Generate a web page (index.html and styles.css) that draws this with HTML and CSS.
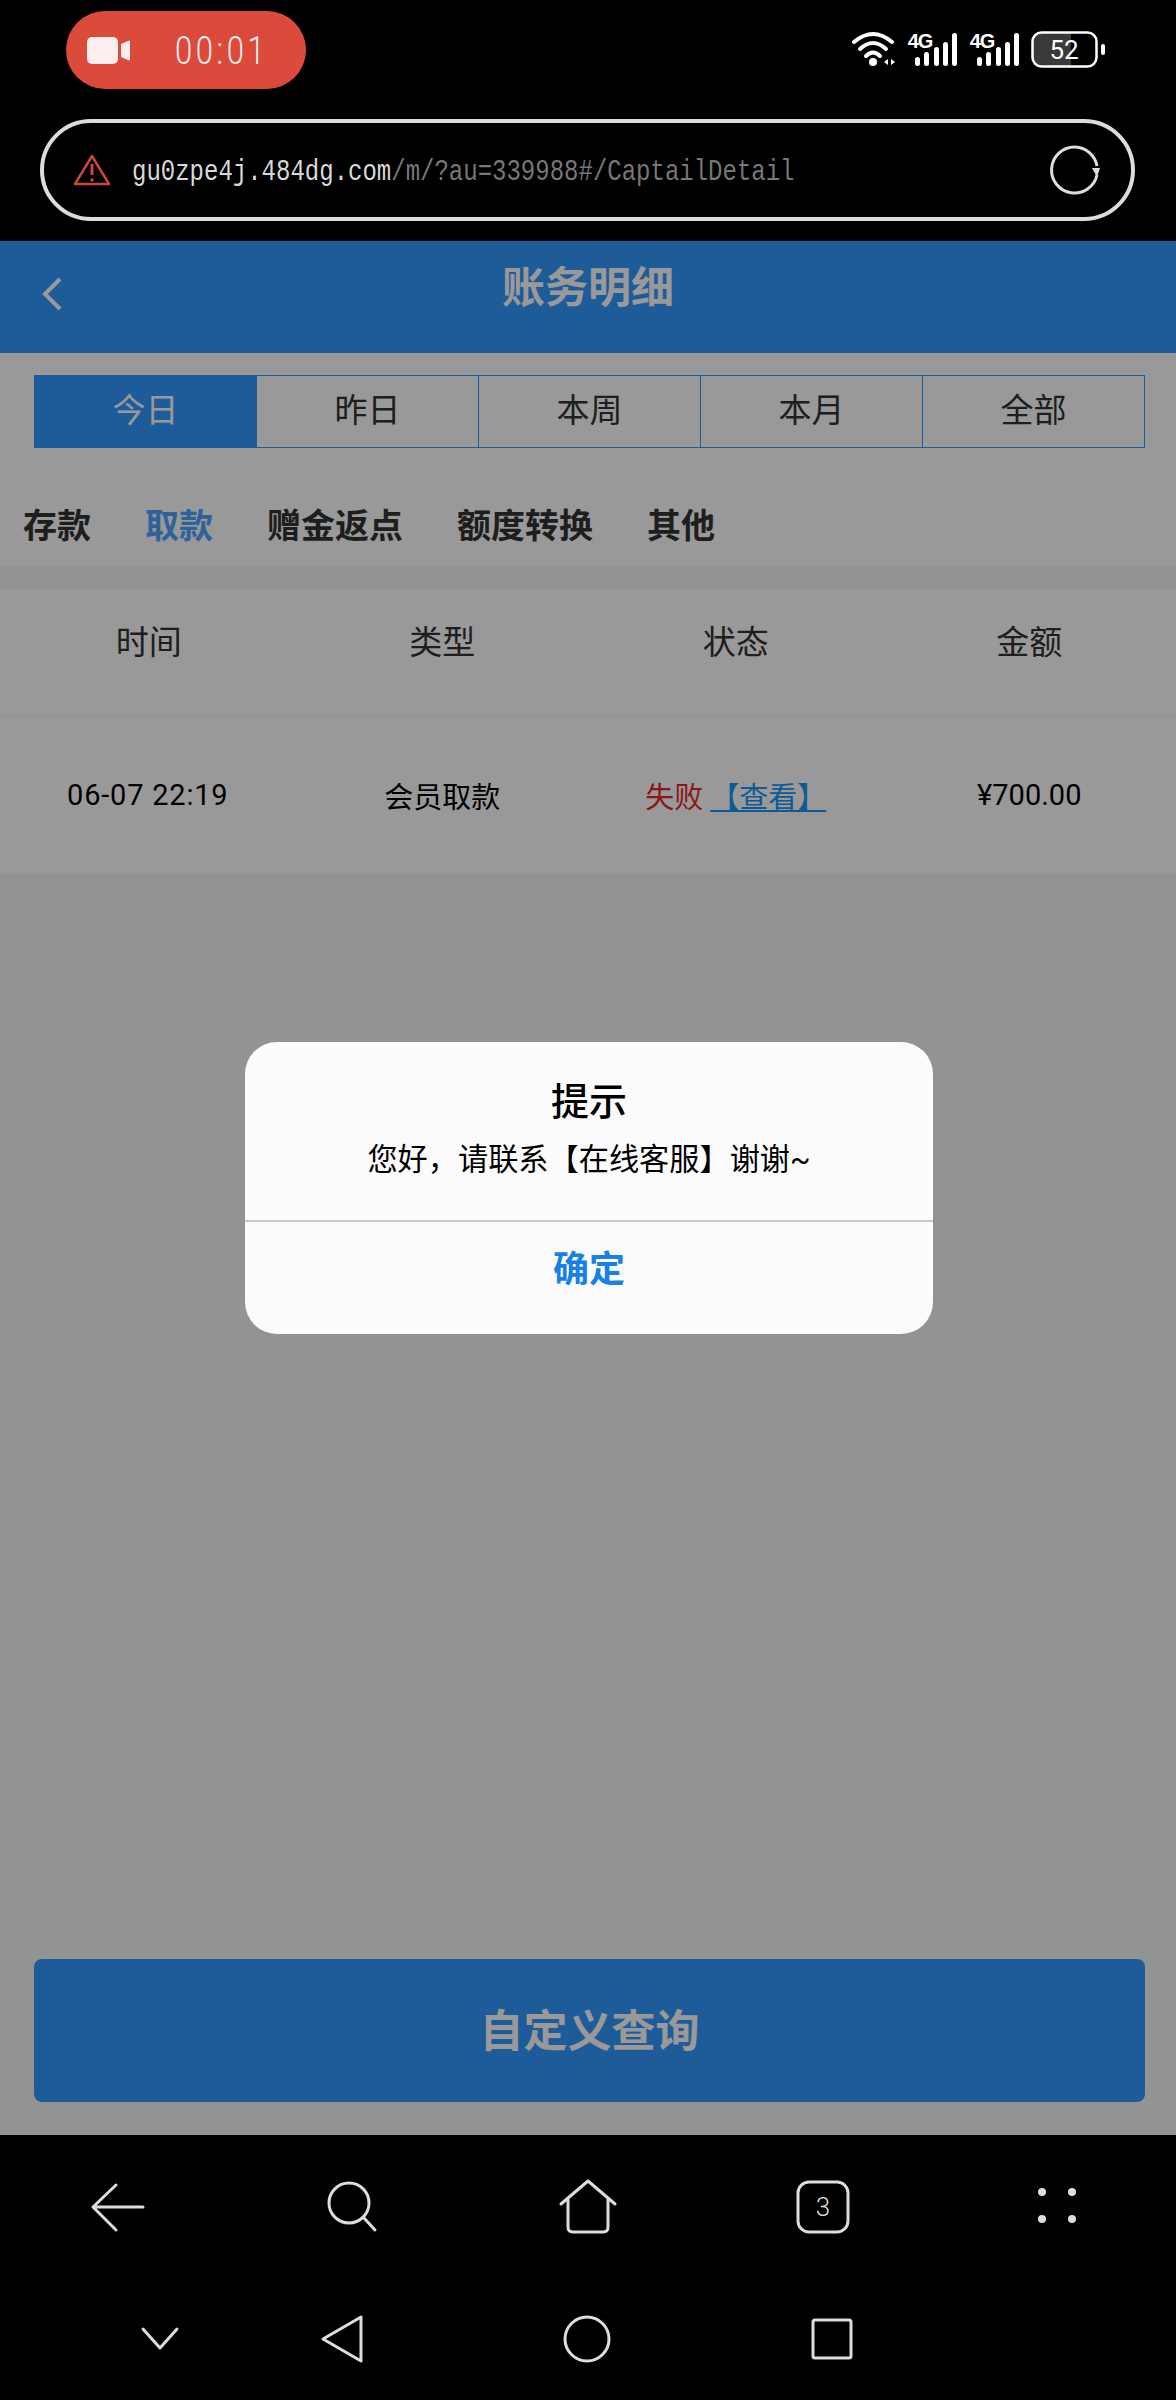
FILE: index.html
```html
<!DOCTYPE html>
<html lang="zh-CN">
<head>
    <meta charset="UTF-8">
    <meta name="viewport" content="width=device-width, initial-scale=1.0">
    <title>账务明细</title>
    <link rel="stylesheet" href="styles.css">
</head>
<body>
    <div class="browser-top">
        <div class="status-bar">
            <div class="record-pill">
                <svg class="record-icon" width="44" height="28" viewBox="0 0 44 28">
                    <rect x="0" y="0" width="31" height="27" rx="5" fill="#fdeeee"/>
                    <path d="M34 7 L42 3.5 Q43 3.5 43 5 V22 Q43 23.5 42 23.5 L34 20 Z" fill="#fdeeee"/>
                </svg>
                <span class="record-time">00:01</span>
            </div>
            <svg class="status-icons" width="262" height="40" viewBox="0 0 262 40">
                <!-- wifi -->
                <g fill="none" stroke="#fff" stroke-width="4" stroke-linecap="round">
                    <path d="M5 12 Q24 -4 43 12"/>
                    <path d="M11 19 Q24 7 37 19"/>
                    <path d="M17 26 Q24 19 31 26"/>
                </g>
                <circle cx="24" cy="32" r="4" fill="#fff"/>
                <path d="M39 29 V35 L35 32 Z M42 29 V35 L46 32 Z" fill="#fff"/>
                <!-- first sim -->
                <text class="sim-label" x="71" y="18">4G</text>
                <g fill="#fff">
                    <rect x="66" y="27" width="5" height="9" rx="2.5"/>
                    <rect x="75" y="22" width="5" height="14" rx="2.5"/>
                    <rect x="85" y="17" width="5" height="19" rx="2.5"/>
                    <rect x="94" y="12" width="5" height="24" rx="2.5"/>
                    <rect x="103" y="3" width="5" height="33" rx="2.5"/>
                </g>
                <!-- second sim -->
                <text class="sim-label" x="133" y="18">4G</text>
                <g fill="#fff">
                    <rect x="128" y="27" width="5" height="9" rx="2.5"/>
                    <rect x="137" y="22" width="5" height="14" rx="2.5"/>
                    <rect x="147" y="17" width="5" height="19" rx="2.5"/>
                    <rect x="156" y="12" width="5" height="24" rx="2.5"/>
                    <rect x="165" y="3" width="5" height="33" rx="2.5"/>
                </g>
                <!-- battery -->
                <path d="M193 3 H222 V36 H193 Q184 36 184 28 V11 Q184 3 193 3 Z" fill="#3a3a3a"/>
                <rect x="183.5" y="2.5" width="64" height="34" rx="9" fill="none" stroke="#fff" stroke-width="2.5"/>
                <rect x="252" y="14" width="4" height="11" rx="2" fill="#fff"/>
                <text class="battery-label" x="215" y="29">52</text>
            </svg>
        </div>
        <div class="url-bar">
            <svg class="warn-icon" width="38" height="34" viewBox="0 0 38 34">
                <path d="M19 3 L36 31 H2 Z" fill="none" stroke="#c8483c" stroke-width="2.5" stroke-linejoin="round"/>
                <path d="M19 11 V22" stroke="#c8483c" stroke-width="3"/>
                <circle cx="19" cy="27" r="1.8" fill="#c8483c"/>
            </svg>
            <div class="url-text"><span class="url-host">gu0zpe4j.484dg.com</span>/m/?au=339988#/CaptailDetail</div>
            <svg class="reload-icon" width="54" height="52" viewBox="0 0 54 52">
                <path d="M27 3 A23 23 0 1 0 49 31" fill="none" stroke="#ddd" stroke-width="3"/>
                <path d="M27 3 A23 23 0 0 1 49 22" fill="none" stroke="#ddd" stroke-width="3"/>
                <path d="M44 24 L52 24 L49 33 Z" fill="#ddd"/>
            </svg>
        </div>
    </div>

    <div class="page">
        <header class="header">
            <svg class="header-back" width="22" height="34" viewBox="0 0 22 34">
                <path d="M19 2 L4 17 L19 32" fill="none" stroke="#fff" stroke-width="4"/>
            </svg>
            <div class="header-title">账务明细</div>
        </header>

        <div class="range-tabs">
            <div class="range-tab active">今日</div>
            <div class="range-tab">昨日</div>
            <div class="range-tab">本周</div>
            <div class="range-tab">本月</div>
            <div class="range-tab">全部</div>
        </div>

        <div class="type-tabs">
            <div class="type-tab">存款</div>
            <div class="type-tab active">取款</div>
            <div class="type-tab">赠金返点</div>
            <div class="type-tab">额度转换</div>
            <div class="type-tab">其他</div>
        </div>

        <div class="records">
            <div class="records-row records-head">
                <div>时间</div>
                <div>类型</div>
                <div>状态</div>
                <div>金额</div>
            </div>
            <div class="records-row records-item">
                <div class="record-date">06-07 22:19</div>
                <div>会员取款</div>
                <div><span class="status-fail">失败</span><a class="status-link">【查看】</a></div>
                <div>¥700.00</div>
            </div>
        </div>

        <div class="query-wrap">
            <button class="query-button">自定义查询</button>
        </div>

        <!-- Alert dialog -->
        <div class="modal">
            <div class="modal-box">
                <div class="modal-body">
                    <div class="modal-title">提示</div>
                    <div class="modal-text">您好，请联系【在线客服】谢谢~</div>
                </div>
                <div class="modal-ok">确定</div>
            </div>
        </div>
    </div>

    <nav class="bottom-nav">
        <div class="browser-nav">
            <svg width="60" height="60" viewBox="0 0 60 60">
                <path d="M28 8 L5 30 L28 53 M5 30 H55"/>
            </svg>
            <svg width="60" height="60" viewBox="0 0 60 60">
                <circle cx="26" cy="26" r="20"/>
                <path d="M41 41 L52 53"/>
            </svg>
            <svg width="60" height="60" viewBox="0 0 60 60">
                <path d="M3 27 L30 4 L57 27"/>
                <path d="M10 22 V50 Q10 55 15 55 H45 Q50 55 50 50 V22"/>
            </svg>
            <svg width="60" height="60" viewBox="0 0 60 60">
                <rect x="5" y="5" width="50" height="50" rx="11"/>
                <text class="tab-count" x="30" y="39">3</text>
            </svg>
            <svg width="60" height="60" viewBox="0 0 60 60">
                <circle class="dot" cx="14" cy="15" r="4"/>
                <circle class="dot" cx="44" cy="15" r="4"/>
                <circle class="dot" cx="14" cy="42" r="4"/>
                <circle class="dot" cx="44" cy="42" r="4"/>
            </svg>
        </div>
        <div class="system-nav">
            <svg class="system-hide" width="60" height="60" viewBox="0 0 60 60">
                <path d="M13 20 L30 39 L47 20"/>
            </svg>
            <svg width="60" height="60" viewBox="0 0 60 60">
                <path d="M49 8 V52 L11 30 Z"/>
            </svg>
            <svg width="60" height="60" viewBox="0 0 60 60">
                <circle cx="30" cy="30" r="22"/>
            </svg>
            <svg width="60" height="60" viewBox="0 0 60 60">
                <rect x="11" y="11" width="38" height="38" rx="2"/>
            </svg>
        </div>
    </nav>
</body>
</html>
```

FILE: styles.css
```css
body {
    margin: 0;
    width: 1176px;
    height: 2400px;
    overflow: hidden;
    background-color: #000;
    font-family: Roboto, "Noto Sans CJK SC", sans-serif;
    display: flex;
    flex-direction: column;
}

/* Status bar and address bar */
.browser-top {
    height: 241px;
    flex-shrink: 0;
}
.status-bar {
    height: 119px;
    padding: 11px 65px 0 66px;
    box-sizing: border-box;
    display: flex;
    justify-content: space-between;
}
.record-pill {
    width: 240px;
    height: 78px;
    border-radius: 39px;
    background-color: #dc4a3c;
    display: flex;
    align-items: center;
    padding-left: 21px;
    box-sizing: border-box;
}
.record-icon {
    margin-top: 1px;
}
.record-time {
    margin-left: 44px;
    font-size: 31px;
    font-weight: 300;
    letter-spacing: 3.6px;
    color: #fdeeee;
    transform: scaleY(1.28);
}
.status-icons {
    margin-top: 19px;
}
.sim-label {
    font-family: "Liberation Sans", sans-serif;
    font-size: 20px;
    font-weight: bold;
    letter-spacing: -1px;
    fill: #fff;
    text-anchor: middle;
}
.battery-label {
    font-family: Roboto, sans-serif;
    font-size: 26px;
    fill: #fff;
    text-anchor: middle;
}
.url-bar {
    margin: 0 41px 0 40px;
    height: 102px;
    box-sizing: border-box;
    border: 4px solid #dcdcdc;
    border-radius: 51px;
    display: flex;
    align-items: center;
    padding-left: 29px;
    padding-right: 29px;
}
.warn-icon {
    flex-shrink: 0;
}
.url-text {
    margin-left: 21px;
    padding-top: 2px;
    flex: 1;
    font-family: "Liberation Mono", monospace;
    font-size: 24px;
    color: #777;
    transform: scaleY(1.25);
}
.url-host {
    color: #d8d8d8;
}
.reload-icon {
    flex-shrink: 0;
}

/* Page under the dimmed layer */
.page {
    position: relative;
    height: 1894px;
    flex-shrink: 0;
    background-color: #f4f7f5;
    display: flex;
    flex-direction: column;
}
.header {
    height: 112px;
    background-color: #3399ff;
    display: flex;
    justify-content: center;
    position: relative;
}
.header-back {
    position: absolute;
    left: 41px;
    top: 36px;
}
.header-title {
    margin-top: 17px;
    font-size: 43px;
    line-height: 60px;
    font-weight: bold;
    color: #fff;
}
.range-tabs {
    background-color: #fff;
    padding: 22px 31px 0 35px;
    display: flex;
}
.range-tab {
    flex: 1;
    height: 73px;
    line-height: 69px;
    box-sizing: border-box;
    border: 1px solid #3399ff;
    margin-left: -1px;
    text-align: center;
    font-size: 33px;
    color: #333;
}
.range-tab.active {
    background-color: #3399ff;
    color: #fff;
}
.type-tabs {
    background-color: #fff;
    height: 119px;
    padding: 32px 0 0 23px;
    display: flex;
    align-items: center;
    gap: 54px;
    box-sizing: border-box;
}
.type-tab {
    font-size: 34px;
    font-weight: bold;
    color: #333;
}
.type-tab.active {
    color: #4da3ff;
}
.records {
    margin-top: 22px;
    background-color: #fff;
}
.records-row {
    display: grid;
    grid-template-columns: repeat(4, 1fr);
    align-items: center;
    text-align: center;
    padding-left: 2px;
}
.records-head {
    height: 128px;
    padding-bottom: 26px;
    font-size: 33px;
    color: #333;
    border-bottom: 1px solid #f0f0f0;
    box-sizing: border-box;
}
.records-item {
    height: 156px;
    font-size: 29px;
    color: #000;
}
.record-date {
    letter-spacing: 0.8px;
    margin-left: -2px;
}
.status-fail {
    color: #e62828;
    margin-right: 7px;
}
.status-link {
    color: #1a96f5;
    text-decoration: underline;
}
.query-wrap {
    margin-top: auto;
    padding: 0 31px 33px 34px;
}
.query-button {
    display: block;
    width: 100%;
    height: 143px;
    padding: 0 0 6px;
    border: none;
    border-radius: 8px;
    background-color: #3399ff;
    color: #fff;
    font-family: inherit;
    font-size: 44px;
    font-weight: bold;
}

/* Modal Styles */
.modal {
    position: absolute;
    top: 0;
    left: 0;
    width: 100%;
    height: 100%;
    background-color: rgba(0, 0, 0, 0.4);
    display: flex;
    justify-content: center;
    align-items: center;
    padding-left: 2px;
    box-sizing: border-box;
}
.modal-box {
    width: 688px;
    height: 292px;
    border-radius: 32px;
    background-color: #fbfbfb;
    display: flex;
    flex-direction: column;
    overflow: hidden;
}
.modal-body {
    height: 180px;
    flex-shrink: 0;
    box-sizing: border-box;
    border-bottom: 2px solid #c8c8c8;
    text-align: center;
    padding-top: 34px;
}
.modal-title {
    font-size: 38px;
    line-height: 52px;
    font-weight: 500;
    color: #000;
}
.modal-text {
    font-size: 30.2px;
    line-height: 44px;
    margin-top: 10px;
    color: #000;
}
.modal-ok {
    flex: 1;
    display: flex;
    justify-content: center;
    align-items: center;
    padding-bottom: 24px;
    font-size: 36px;
    font-weight: bold;
    color: #1a7fe6;
}

/* Browser toolbar and system buttons */
.bottom-nav {
    flex: 1;
}
.bottom-nav svg {
    fill: none;
    stroke: #ddd;
    stroke-width: 3;
    stroke-linecap: round;
    stroke-linejoin: round;
}
.browser-nav {
    height: 144px;
    display: grid;
    grid-template-columns: repeat(5, 1fr);
    justify-items: center;
    align-items: center;
}
.system-nav {
    height: 120px;
    display: flex;
    align-items: center;
    padding-left: 130px;
    gap: 185px;
}
.system-hide {
    margin-right: -63px;
}
.bottom-nav .dot {
    fill: #ddd;
    stroke: none;
}
.bottom-nav .tab-count {
    font-family: Roboto, sans-serif;
    font-weight: 300;
    font-size: 26px;
    fill: #ddd;
    stroke: none;
    text-anchor: middle;
}
```
